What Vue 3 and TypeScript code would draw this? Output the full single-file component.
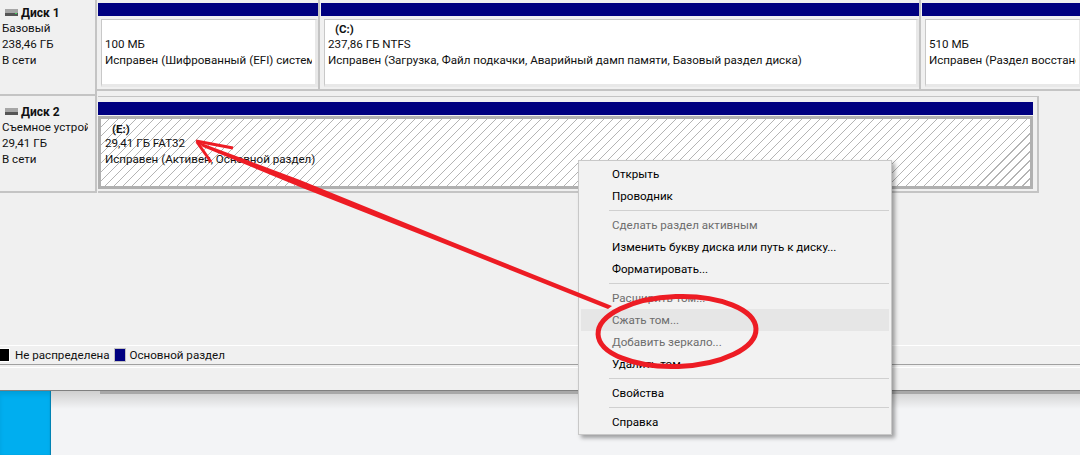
<script setup lang="ts">
interface Part { label?: string; size: string; status: string; cls: string }
const parts: Part[] = [
  { size: '100 МБ', status: 'Исправен (Шифрованный (EFI) системный раздел)', cls: 'p1' },
  { label: '(C:)', size: '237,86 ГБ NTFS', status: 'Исправен (Загрузка, Файл подкачки, Аварийный дамп памяти, Базовый раздел диска)', cls: 'p2' },
  { size: '510 МБ', status: 'Исправен (Раздел восстановления)', cls: 'p3' },
]
interface Item { t: string; off?: boolean; hot?: boolean; sep?: boolean }
const items: Item[] = [
  { t: 'Открыть' }, { t: 'Проводник' }, { t: '', sep: true },
  { t: 'Сделать раздел активным', off: true },
  { t: 'Изменить букву диска или путь к диску...' },
  { t: 'Форматировать...' }, { t: '', sep: true },
  { t: 'Расширить том...', off: true },
  { t: 'Сжать том...', off: true, hot: true },
  { t: 'Добавить зеркало...', off: true },
  { t: 'Удалить том...' }, { t: '', sep: true },
  { t: 'Свойства' }, { t: '', sep: true },
  { t: 'Справка' },
]
</script>

<template>
  <div class="page">
    <div class="window">
      <div class="disks">
        <div class="row row1">
          <div class="info">
            <div class="name"><svg class="drive" width="13" height="7" viewBox="0 0 13 7"><rect width="13" height="4" fill="#a6a6a6"/><rect y="4" width="13" height="3" fill="#555"/><rect x="10" y="4" width="2" height="1" fill="#3fd15a"/></svg>Диск 1</div>
            <div>Базовый</div><div>238,46 ГБ</div><div>В сети</div>
          </div>
          <div class="parts">
            <div v-for="p in parts" :key="p.size" class="part" :class="p.cls">
              <div class="head"></div>
              <div class="box">
                <div class="lab">{{ p.label || '&nbsp;' }}</div>
                <div class="line">{{ p.size }}</div>
                <div class="line">{{ p.status }}</div>
              </div>
            </div>
          </div>
        </div>
        <div class="row row2">
          <div class="info">
            <div class="name"><svg class="drive" width="13" height="7" viewBox="0 0 13 7"><rect width="13" height="4" fill="#a6a6a6"/><rect y="4" width="13" height="3" fill="#555"/></svg>Диск 2</div>
            <div class="clip">Съемное устройство</div><div>29,41 ГБ</div><div>В сети</div>
          </div>
          <div class="vol">
            <div class="head"></div>
            <div class="hatch">
              <div class="lab">(E:)</div>
              <div class="line">29,41 ГБ FAT32</div>
              <div class="line">Исправен (Активен, Основной раздел)</div>
            </div>
          </div>
        </div>
      </div>
      <div class="legend">
        <span class="sw black"></span><span>Не распределена</span>
        <span class="sw navy"></span><span>Основной раздел</span>
      </div>
      <div class="status"></div>
    </div>
    <div class="below">
      <div class="blue"></div>
      <div class="desk"></div>
    </div>

    <ul class="menu">
      <template v-for="(m, i) in items" :key="i">
        <li v-if="m.sep" class="sep"></li>
        <li v-else class="item" :class="{ off: m.off, hot: m.hot }">{{ m.t }}</li>
      </template>
    </ul>

    <svg class="ink" width="1080" height="455" viewBox="0 0 1080 455" fill="none">
      <path d="M196 141 L300 180 L450 241 L612 306 L608 309 L450 246 L300 187 L203 147 Z" fill="#ed1c24"/>
      <path d="M196 141 L233 148" stroke="#ed1c24" stroke-width="3"/>
      <path d="M197 142 L211 162" stroke="#ed1c24" stroke-width="3"/>
      <ellipse cx="677" cy="331.5" rx="79" ry="35" stroke="#ed1c24" stroke-width="5" transform="rotate(-2 677 331)"/>
    </svg>
  </div>
</template>

<style>
html, body { margin: 0; padding: 0; background: #f3f4f6; overflow: hidden; }
</style>

<style scoped>
.page { position: relative; width: 1080px; height: 455px; overflow: hidden; font-family: Roboto, "Open Sans", sans-serif; font-size: 11.6px; line-height: 16px; color: #111; }
.window { height: 391px; box-sizing: border-box; border-bottom: 1px solid #808080; display: flex; flex-direction: column; background: #f0f0f0; }
.disks { height: 345px; flex: none; }
.row { display: flex; }
.row1 { height: 96px; align-items: flex-start; }
.row2 { height: 97px; }
.info { flex: none; box-sizing: border-box; width: 97px; padding-left: 2px; border-right: 2px solid #c4c4c4; border-bottom: 2px solid #c4c4c4; white-space: nowrap; overflow: hidden; }
.row1 .info { height: 96px; padding-top: 5px; }
.row1 .name { height: 15px; }
.row2 .info { height: 97px; padding-top: 8px; }
.row2 .name { height: 15px; }
.clip { overflow: hidden; width: 86px; }
.name { font-weight: 700; display: flex; align-items: center; gap: 3px; margin-left: 3px; font-size: 12px; }
.drive { flex: none; }
.parts { display: flex; flex: 1; min-width: 0; height: 91px; box-sizing: border-box; padding-left: 1px; overflow: hidden; border-bottom: 2px solid #c4c4c4; }
.part { flex: none; padding: 3px 0 0; border-right: 2px solid #c4c4c4; margin-right: 1px; }
.p1 { width: 220px; }
.p2 { width: 598px; }
.p3 { width: 160px; border-right: 0; }
.head { height: 13px; background: #000080; }
.box { margin-top: 3px; height: 59px; background: #fff; border: 3px solid #e8e8e8; border-left: 1px solid #c8c8c8; border-top: 1px solid #c8c8c8; margin-left: 3px; padding: 2px 3px 3px; overflow: hidden; }
.box .line { line-height: 16px; }
.lab { font-weight: 700; padding-left: 7px; height: 14px; line-height: 15px; font-size: 11.5px; }
.line { white-space: nowrap; overflow: hidden; line-height: 15.5px; }
.vol { width: 935px; margin-left: 1px; padding: 5px 4px 0 0; border-right: 2px solid #c4c4c4; border-bottom: 2px solid #c4c4c4; height: 89px; border-top: 1px solid #c4c4c4; }
.hatch { margin-top: 1px; height: 62px; border: 3px solid #b0b0b0; padding: 3px 4px 2px; background: #fff repeating-linear-gradient(135deg, #fff 0, #fff 5.36px, #b4b4b4 5.36px, #b4b4b4 6.36px); }
.legend { height: 20px; flex: none; box-sizing: border-box; border-top: 1px solid #fff; border-bottom: 1px solid #a0a0a0; display: flex; align-items: center; }
.sw { height: 14px; border: 1px solid #fff; flex: none; box-sizing: border-box; }
.sw.black { background: #000; width: 10px; margin-right: 5px; border-left: 0; }
.sw.navy { background: #000080; width: 12px; margin-left: 4px; margin-right: 4px; border-color: #c0c0c0; }
.status { flex: 1; margin-top: 2px; border-top: 1px solid #fff; }
.below { height: 64px; display: flex; }
.blue { width: 51px; background: #00aeef; box-shadow: inset -1px 0 1px rgba(0,0,0,.25), inset 0 4px 4px rgba(0,0,0,.08); }
.desk { flex: 1; background: linear-gradient(#cfcfcf, #f3f4f6 18px); position: relative; }
.desk::before { content: ""; position: absolute; left: 49px; right: 0; top: 0; height: 3px; background: #a8a8a8; }
.menu { position: absolute; left: 578px; top: 160px; width: 314px; height: 275px; margin: 0; padding: 2px; box-sizing: border-box; list-style: none; background: #f2f2f2; border: 1px solid #c8c8c8; box-shadow: 3px 3px 4px rgba(0,0,0,.35); }
.item { height: 22px; line-height: 22px; padding-left: 31px; color: #000; white-space: nowrap; }
.off { color: #6d6d6d; }
.hot { background: #e6e6e6; }
.sep { height: 1px; background: #d0d0d0; margin: 3px 0 3px 28px; }
.ink { position: absolute; left: 0; top: 0; pointer-events: none; }
</style>
